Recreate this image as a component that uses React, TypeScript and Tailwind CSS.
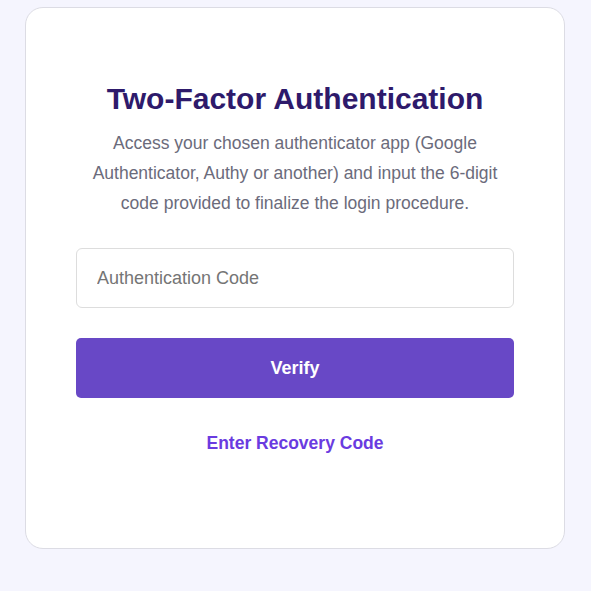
export default function App() {
  return (
    <div className="min-h-[591px] bg-[#f5f5fe] pt-[7px] pl-[25px] font-['Liberation_Sans',Arial,sans-serif]">
      <div className="w-[540px] h-[542px] rounded-[18px] border border-[#dcdce4] bg-white px-[50px] pt-[73px]">
        <h1 className="text-center text-[30px] font-bold leading-[36px] text-[#2e1a6b]">
          Two-Factor Authentication
        </h1>
        <p className="mt-[11px] px-[10px] text-center text-[17.5px] leading-[30px] text-[#6b6b7b]">
          Access your chosen authenticator app (Google Authenticator, Authy or another) and input the 6-digit
          code provided to finalize the login procedure.
        </p>
        <input
          type="text"
          placeholder="Authentication Code"
          className="mt-[30px] block h-[60px] w-full rounded-[6px] border border-[#dddddd] px-[20px] text-[18px] text-[#333] placeholder:text-[#757575] outline-none"
        />
        <button className="mt-[30px] block h-[60px] w-full rounded-[5px] bg-[#6848c6] text-[18px] font-bold text-white">
          Verify
        </button>
        <div className="mt-[32px] text-center">
          <a href="#" className="text-[17.5px] font-bold text-[#6a3be0]">
            Enter Recovery Code
          </a>
        </div>
      </div>
    </div>
  );
}
